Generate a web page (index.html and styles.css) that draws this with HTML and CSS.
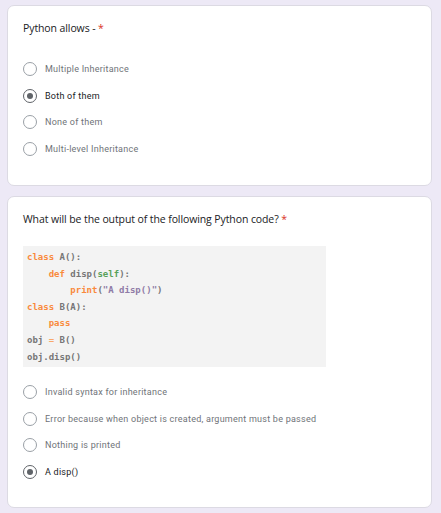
FILE: index.html
```html
<!DOCTYPE html>
<html>
<head>
<meta charset="utf-8">
<link rel="stylesheet" href="styles.css">
</head>
<body>
<div class="card card-one">
  <div class="title">Python allows - <span class="req">*</span></div>
  <div class="options">
    <div class="opt"><span class="radio"></span><span class="label">Multiple Inheritance</span></div>
    <div class="opt checked"><span class="radio"></span><span class="label">Both of them</span></div>
    <div class="opt"><span class="radio"></span><span class="label">None of them</span></div>
    <div class="opt"><span class="radio"></span><span class="label">Multi-level Inheritance</span></div>
  </div>
</div>
<div class="card card-two">
  <div class="title">What will be the output of the following Python code? <span class="req">*</span></div>
  <div class="code">
    <div class="line"><span class="kw">class</span> A():</div>
    <div class="line ind1"><span class="kw">def</span> disp(<span class="self">self</span>):</div>
    <div class="line ind2"><span class="kw">print</span>(<span class="str">"A disp()"</span>)</div>
    <div class="line"><span class="kw">class</span> B(A):</div>
    <div class="line ind1"><span class="kw">pass</span></div>
    <div class="line">obj <span class="op">=</span> B()</div>
    <div class="line">obj.disp()</div>
  </div>
  <div class="options options-two">
    <div class="opt"><span class="radio"></span><span class="label">Invalid syntax for inheritance</span></div>
    <div class="opt"><span class="radio"></span><span class="label">Error because when object is created, argument must be passed</span></div>
    <div class="opt"><span class="radio"></span><span class="label">Nothing is printed</span></div>
    <div class="opt checked"><span class="radio"></span><span class="label">A disp()</span></div>
  </div>
</div>
</body>
</html>
```
FILE: styles.css
```css
html, body {
  margin: 0;
  padding: 0;
  background: #ede9f6;
}
body {
  padding: 5px 9px 5px 7px;
  font-family: "Open Sans", Roboto, sans-serif;
}
.card {
  background: #fff;
  border: 1px solid #dcdae3;
  border-radius: 7px;
  box-sizing: border-box;
  padding: 15px 15px 0 15px;
}
.card-one {
  height: 181px;
}
.card-two {
  margin-top: 10px;
  height: 312px;
}
.title {
  font-size: 10.5px;
  line-height: 14px;
  color: #202124;
  letter-spacing: -0.1px;
}
.req {
  color: #d93025;
}
.options {
  margin-top: 21px;
  display: flex;
  flex-direction: column;
}
.options-two {
  margin-top: 12px;
}
.opt {
  height: 26.5px;
  display: flex;
  align-items: center;
  gap: 8px;
}
.radio {
  width: 14px;
  height: 14px;
  box-sizing: border-box;
  border: 1.5px solid #9aa0a6;
  border-radius: 50%;
  display: flex;
  align-items: center;
  justify-content: center;
  flex: none;
}
.checked .radio {
  border-color: #5f6368;
}
.checked .radio::after {
  content: "";
  width: 6px;
  height: 6px;
  border-radius: 50%;
  background: #5f6368;
}
.label {
  font-family: Roboto, "Noto Sans", sans-serif;
  font-size: 9px;
  letter-spacing: 0.25px;
  color: #6f7378;
}
.checked .label {
  color: #202124;
}
.code {
  margin-top: 20px;
  width: 303px;
  box-sizing: border-box;
  background: #f3f3f3;
  padding: 3px 4px 2px 4px;
  font-family: "DejaVu Sans Mono", monospace;
  font-weight: bold;
  font-size: 9px;
  line-height: 16.6px;
  color: #767676;
}
.line {
  white-space: pre;
  height: 16.6px;
}
.ind1 {
  padding-left: 4ch;
}
.ind2 {
  padding-left: 8ch;
}
.kw {
  color: #f98a3c;
}
.self {
  color: #58a15a;
}
.str {
  color: #8f7ba6;
}
.op {
  color: #f9a86a;
}
```
